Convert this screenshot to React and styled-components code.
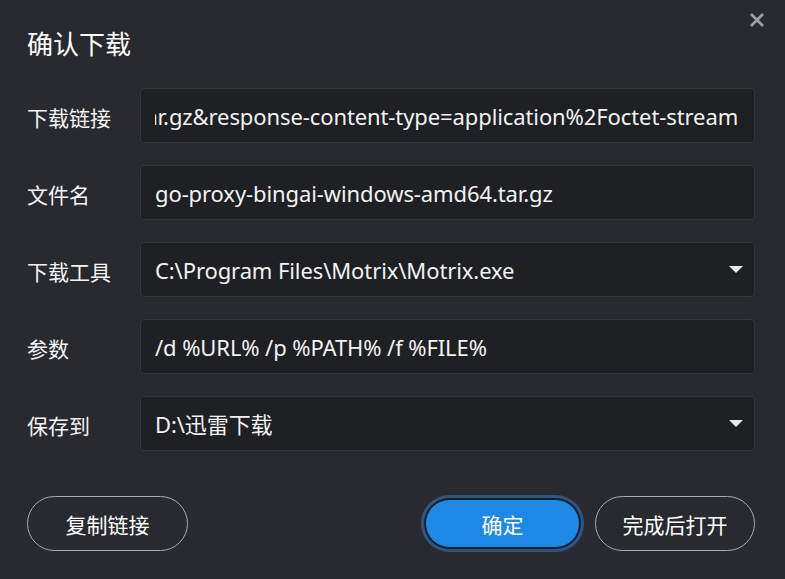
import React, { useLayoutEffect, useRef } from "react";
import styled, { createGlobalStyle } from "styled-components";

const Global = createGlobalStyle`
  html, body { margin: 0; padding: 0; background: #292a2f; }
  body { font-family: "Noto Sans", "Noto Sans CJK SC", sans-serif; color: #f2f2f2; }
  * { box-sizing: border-box; }
`;

const Dialog = styled.div`
  position: relative;
  width: 785px;
  height: 579px;
  background: #292a2f;
  padding: 25px 30px 0 27px;
  display: flex;
  flex-direction: column;
`;

const Title = styled.h1`
  margin: 0;
  font-size: 26px;
  font-weight: 400;
  line-height: 36px;
  height: 36px;
  color: #ffffff;
  font-family: "Noto Sans CJK SC", sans-serif;
`;

const Close = styled.button`
  position: absolute;
  top: 12px;
  right: 20px;
  width: 16px;
  height: 16px;
  padding: 0;
  border: none;
  background: transparent;
  display: flex;
`;

const Form = styled.div`
  margin-top: 27px;
  display: flex;
  flex-direction: column;
  gap: 22px;
`;

const Row = styled.div`
  display: flex;
  align-items: center;
`;

const Label = styled.label`
  width: 113px;
  flex: none;
  font-size: 21px;
  color: #f4f4f4;
  font-family: "Noto Sans CJK SC", sans-serif;
  padding-top: 3px;
`;

const Field = styled.div`
  flex: 1;
  min-width: 0;
  height: 55px;
  background: #1f2024;
  border: 1px solid #36373c;
  border-radius: 4px;
  padding: 0 ${(p) => (p.$select ? 11 : 16)}px 0 14px;
  display: flex;
  align-items: center;
  gap: 12px;
`;

const Input = styled.input`
  flex: 1;
  min-width: 0;
  height: 30px;
  padding: 0;
  margin: 0;
  border: none;
  outline: none;
  background: transparent;
  font-size: 22px;
  line-height: 30px;
  color: #f2f2f2;
  font-family: "Noto Sans", "Noto Sans CJK SC", sans-serif;
  letter-spacing: -0.1px;
`;

const Caret = styled.span`
  flex: none;
  width: 0;
  height: 0;
  border-left: 7px solid transparent;
  border-right: 7px solid transparent;
  border-top: 7px solid #e8e8e8;
`;

const Footer = styled.div`
  margin-top: 45px;
  display: flex;
  align-items: center;
  gap: 12px;
`;

const Spacer = styled.div`
  flex: 1;
`;

const PillButton = styled.button`
  height: 55px;
  width: ${(p) => p.$w}px;
  border-radius: 28px;
  border: 1px solid #a9a9ad;
  background: transparent;
  color: #ffffff;
  font-size: 21px;
  font-family: "Noto Sans CJK SC", sans-serif;
  padding: 0;
  cursor: pointer;
`;

const PrimaryButton = styled.button`
  height: 49px;
  width: 155px;
  margin: 0 3px;
  border-radius: 25px;
  border: 1px solid #1c1d21;
  background: #1e88e5;
  box-shadow: 0 0 0 1px #1c1d21, 0 0 0 4px #2c5686;
  color: #ffffff;
  font-size: 21px;
  font-family: "Noto Sans CJK SC", sans-serif;
  padding: 0;
  cursor: pointer;
`;

const rows = [
  { label: "下载链接", value: "https://objects.githubusercontent.com/go-proxy-bingai-windows-amd64.tar.gz&response-content-type=application%2Foctet-stream", end: true },
  { label: "文件名", value: "go-proxy-bingai-windows-amd64.tar.gz" },
  { label: "下载工具", value: "C:\\Program Files\\Motrix\\Motrix.exe", select: true },
  { label: "参数", value: "/d %URL% /p %PATH% /f %FILE%" },
  { label: "保存到", value: "D:\\迅雷下载", select: true },
];

function FieldRow({ label, value, end, select }) {
  const ref = useRef(null);
  useLayoutEffect(() => {
    if (end && ref.current) ref.current.scrollLeft = ref.current.scrollWidth;
  }, [end]);
  return (
    <Row>
      <Label>{label}</Label>
      <Field $select={select}>
        <Input ref={ref} readOnly value={value} />
        {select && <Caret />}
      </Field>
    </Row>
  );
}

export default function App() {
  return (
    <>
      <Global />
      <Dialog>
        <Title>确认下载</Title>
        <Close aria-label="close">
          <svg width="16" height="16" viewBox="0 0 16 16">
            <path d="M2 2 L14 14 M14 2 L2 14" stroke="#9fa1a6" strokeWidth="2.8" strokeLinecap="butt" />
          </svg>
        </Close>
        <Form>
          {rows.map((r) => (
            <FieldRow key={r.label} {...r} />
          ))}
        </Form>
        <Footer>
          <PillButton $w={161}>复制链接</PillButton>
          <Spacer />
          <PrimaryButton>确定</PrimaryButton>
          <PillButton $w={160}>完成后打开</PillButton>
        </Footer>
      </Dialog>
    </>
  );
}
